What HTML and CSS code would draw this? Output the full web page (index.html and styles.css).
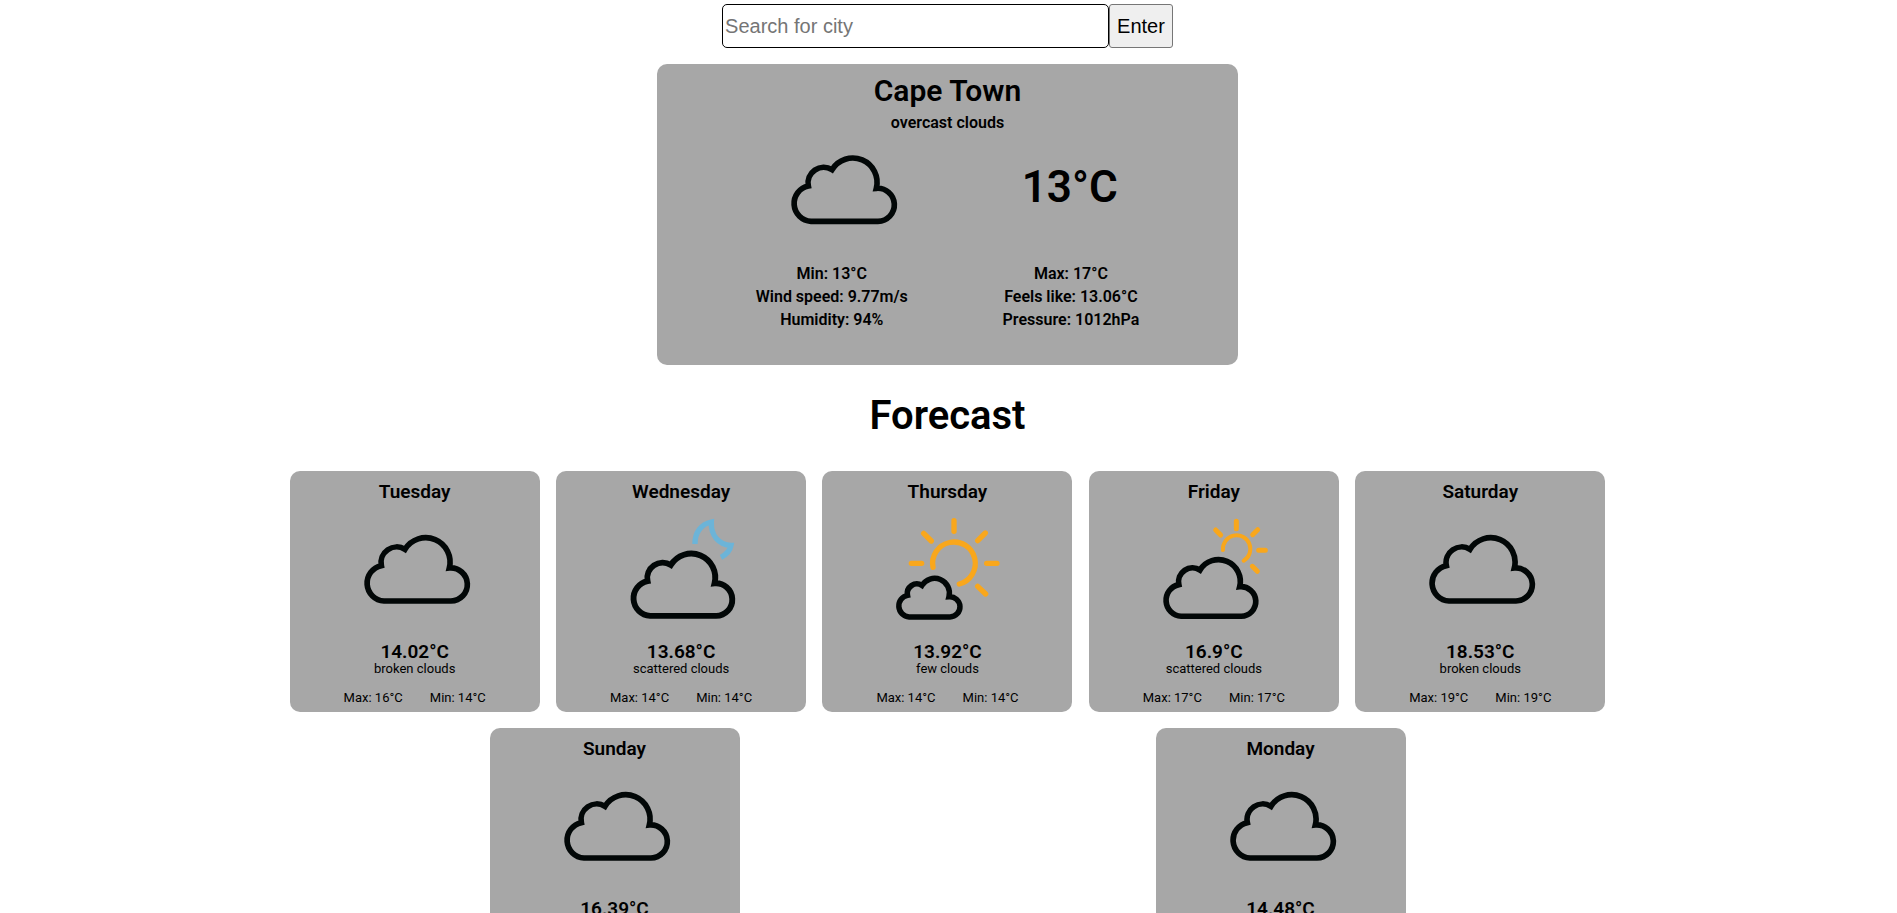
FILE: index.html
```html
<!DOCTYPE html>
<html lang="en">
<head>
<meta charset="utf-8">
<meta name="viewport" content="width=device-width, initial-scale=1">
<title>Weather</title>
<link rel="stylesheet" href="styles.css">
</head>
<body>
<svg class="sprite" aria-hidden="true">
  <defs>
    <path id="cloud-shape" d="M99 288A53.6 53.6 0 0 1 91 182A47 47 0 0 1 162 133A73 73 0 0 1 295 189A49.6 49.6 0 1 1 300 288Z"/>
    <symbol id="cloudy" viewBox="0 0 384 384">
      <use href="#cloud-shape" class="cloud" stroke-width="17"/>
    </symbol>
    <symbol id="cloudy-night" viewBox="0 0 384 384">
      <path class="moon" d="M234 117C233 84 252 57 283 51C281 91 305 119 342 121C339 137 328 149 312 157"/>
      <use href="#cloud-shape" class="cloud" stroke-width="18" transform="translate(2 49) scale(.985)"/>
    </symbol>
    <symbol id="mostly-sunny" viewBox="0 0 384 384">
      <path class="sun" stroke-width="16" d="M150 187A64 64 0 1 1 229 237M213 47V79M311 175H342M85 175H116M284 107L307 84M122 85L145 108M284 244L308 267"/>
      <use href="#cloud-shape" class="cloud" stroke-width="27" transform="translate(18 160) scale(.61)"/>
    </symbol>
    <symbol id="partly-cloudy" viewBox="0 0 384 384">
      <path class="sun" stroke-width="12" d="M219 135A41 41 0 1 1 281 167"/>
      <path class="sun" stroke-width="15" d="M259 49V71M326 136H346M308 89L323 74M197 75L212 90M307 184L322 199"/>
      <use href="#cloud-shape" class="cloud" stroke-width="19" transform="translate(5 76) scale(.895)"/>
    </symbol>
  </defs>
</svg>

<form class="search">
  <input class="search-input" type="text" placeholder="Search for city" aria-label="Search for city">
  <button class="search-button" type="button">Enter</button>
</form>

<main>
  <section class="current">
    <h2 class="city">Cape Town</h2>
    <p class="summary">overcast clouds</p>
    <div class="current-row">
      <svg class="current-icon" viewBox="-3 26 384 336" role="img" aria-label="overcast clouds"><use href="#cloud-shape" class="cloud" stroke-width="17"/></svg>
      <p class="current-temp">13°C</p>
    </div>
    <div class="current-row details">
      <div>
        <p>Min: 13°C</p>
        <p>Wind speed: 9.77m/s</p>
        <p>Humidity: 94%</p>
      </div>
      <div>
        <p>Max: 17°C</p>
        <p>Feels like: 13.06°C</p>
        <p>Pressure: 1012hPa</p>
      </div>
    </div>
  </section>

  <h1 class="heading">Forecast</h1>

  <section class="forecast">
    <article class="day">
      <h3 class="day-name">Tuesday</h3>
      <svg class="day-icon" aria-hidden="true"><use href="#cloudy"/></svg>
      <p class="day-temp">14.02°C</p>
      <p class="day-text">broken clouds</p>
      <div class="range"><span>Max: 16°C</span><span>Min: 14°C</span></div>
    </article>
    <article class="day">
      <h3 class="day-name">Wednesday</h3>
      <svg class="day-icon" aria-hidden="true"><use href="#cloudy-night"/></svg>
      <p class="day-temp">13.68°C</p>
      <p class="day-text">scattered clouds</p>
      <div class="range"><span>Max: 14°C</span><span>Min: 14°C</span></div>
    </article>
    <article class="day">
      <h3 class="day-name">Thursday</h3>
      <svg class="day-icon" aria-hidden="true"><use href="#mostly-sunny"/></svg>
      <p class="day-temp">13.92°C</p>
      <p class="day-text">few clouds</p>
      <div class="range"><span>Max: 14°C</span><span>Min: 14°C</span></div>
    </article>
    <article class="day">
      <h3 class="day-name">Friday</h3>
      <svg class="day-icon" aria-hidden="true"><use href="#partly-cloudy"/></svg>
      <p class="day-temp">16.9°C</p>
      <p class="day-text">scattered clouds</p>
      <div class="range"><span>Max: 17°C</span><span>Min: 17°C</span></div>
    </article>
    <article class="day">
      <h3 class="day-name">Saturday</h3>
      <svg class="day-icon" aria-hidden="true"><use href="#cloudy"/></svg>
      <p class="day-temp">18.53°C</p>
      <p class="day-text">broken clouds</p>
      <div class="range"><span>Max: 19°C</span><span>Min: 19°C</span></div>
    </article>
    <article class="day">
      <h3 class="day-name">Sunday</h3>
      <svg class="day-icon" aria-hidden="true"><use href="#cloudy"/></svg>
      <p class="day-temp">16.39°C</p>
    </article>
    <article class="day">
      <h3 class="day-name">Monday</h3>
      <svg class="day-icon" aria-hidden="true"><use href="#cloudy"/></svg>
      <p class="day-temp">14.48°C</p>
    </article>
  </section>
</main>
</body>
</html>
```
FILE: styles.css
```css
* {
  box-sizing: border-box;
}

html {
  scrollbar-width: none;
}

body {
  margin: 0;
  padding-right: 2px;
  background: #fff;
  color: #000;
  font-family: Roboto, "Liberation Sans", sans-serif;
}

h1, h2, h3, p {
  margin: 0;
  font-weight: 600;
}

.sprite {
  position: absolute;
  width: 0;
  height: 0;
}

.cloud {
  fill: none;
  stroke: #020707;
}

.sun {
  fill: none;
  stroke: #f9a71c;
  stroke-linecap: round;
}

.moon {
  fill: none;
  stroke: #6cb4d8;
  stroke-width: 16;
}

.search {
  display: flex;
  justify-content: center;
  padding: 4px 0 16px;
}

.search-input,
.search-button {
  height: 44px;
  font: 20px "Liberation Sans", Arial, sans-serif;
}

.search-input {
  width: 387px;
  padding: 2px;
  border: 1px solid #000;
  border-radius: 5px;
}

.search-input::placeholder {
  color: #757575;
}

.search-button {
  padding: 0 7px;
  border: 1px solid #767676;
  border-radius: 3px;
  background: #efefef;
  color: #000;
}

.current {
  width: 581px;
  max-width: 100%;
  margin: 0 auto;
  padding: 9px 4px 34px;
  border-radius: 10px;
  background: #a7a7a7;
  text-align: center;
}

.city {
  margin-bottom: 4px;
  font-size: 30px;
  line-height: 36px;
}

.summary {
  margin-bottom: 1px;
  font-size: 16px;
  line-height: 20px;
}

.current-row {
  display: flex;
  justify-content: space-evenly;
  align-items: center;
}

.current-icon {
  width: 128px;
  height: 112px;
}

.current-temp {
  margin-bottom: 6px;
  font-size: 44px;
}

.details {
  margin-top: 16px;
  font-size: 16px;
  line-height: 23px;
}

.heading {
  margin: 27px 0 23px;
  font-size: 40px;
  line-height: 48px;
  text-align: center;
}

.forecast {
  display: flex;
  flex-wrap: wrap;
  justify-content: space-around;
  max-width: 1332px;
  margin: 0 auto;
}

.day {
  display: flex;
  flex-direction: column;
  align-items: center;
  width: 250px;
  min-height: 241px;
  margin: 8px;
  padding: 9px 0 7px;
  border-radius: 10px;
  background: #a7a7a7;
}

.day-name {
  font-size: 19px;
  line-height: 24px;
}

.day-icon {
  width: 128px;
  height: 128px;
  margin: 1px 0 8px;
}

.day-temp {
  font-size: 19px;
  line-height: 21px;
}

.day-text {
  font-size: 13px;
  font-weight: 400;
  line-height: 14px;
}

.range {
  display: flex;
  gap: 27px;
  margin-top: 14px;
  font-size: 13px;
  line-height: 15px;
}
```
